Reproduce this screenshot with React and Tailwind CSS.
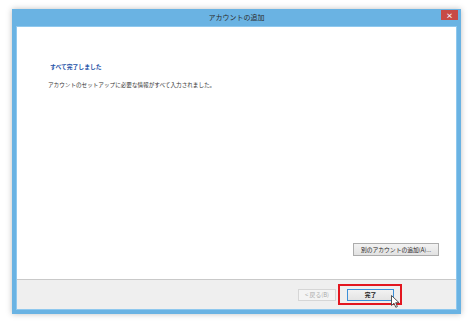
import React from 'react';

// pointer cursor drawn over the finish button
function Cursor() {
  return (
    <svg width="9" height="13" viewBox="0 0 9 13" className="absolute left-[44px] top-[6px]">
      <path d="M0.5 0.5 L0.5 10.5 L3 8.2 L4.8 12.3 L6.4 11.6 L4.7 7.7 L8 7.7 Z" fill="#fff" stroke="#444" strokeWidth="0.9" strokeLinejoin="round" />
    </svg>
  );
}

export default function App() {
  const jp = { fontFamily: '"Noto Sans CJK JP", "Noto Sans", sans-serif' };

  return (
    <div className="w-[471px] h-[326px] bg-white pt-[9px] pl-[12px]" style={jp}>
      <div className="w-[449px] h-[305px] flex flex-col bg-[#6ab3e3] shadow-[0_0_6px_rgba(0,0,0,0.25)]">
        {/* Title bar */}
        <div className="relative h-[17px] flex items-center justify-center">
          <span className="text-[7px] text-[#2b2b2b] leading-none">アカウントの追加</span>
          <div className="absolute right-[3px] top-[1px] w-[17px] h-[10px] bg-[#c74a45] flex items-center justify-center">
            <span className="text-white text-[7px] font-bold leading-none">×</span>
          </div>
        </div>

        {/* Client area */}
        <div className="flex-1 mx-[4px] mb-[4px] flex flex-col bg-white border border-[#8fc8ee]">
          <div className="flex-1 flex flex-col pl-[33px] pr-[17px]">
            <div className="mt-[37px] text-[5.8px] font-semibold text-[#2553a8] leading-none">すべて完了しました</div>
            <div className="mt-[13px] -ml-[2px] text-[5.6px] text-[#333] leading-none">
              アカウントのセットアップに必要な情報がすべて入力されました。
            </div>
            <div className="flex-1" />
            <div className="flex justify-end mb-[23px]">
              <div className="w-[86px] h-[13px] flex items-center justify-center bg-gradient-to-b from-[#f2f2f2] to-[#e2e2e2] border border-[#acacac] text-[5.8px] text-[#222] leading-none">
                別のアカウントの追加(A)...
              </div>
            </div>
          </div>

          {/* Footer */}
          <div className="h-[30px] bg-[#efefef] border-t border-[#c9c9c9] flex justify-end items-start pt-[9px] pr-[62px] gap-[11px]">
            <div className="w-[38px] h-[12px] flex items-center justify-center bg-[#f4f4f4] border border-[#d6d6d6] text-[5.8px] text-[#a8a8a8] leading-none">
              &lt; 戻る(B)
            </div>
            <div className="relative">
              <div className="w-[47px] h-[12px] flex items-center justify-center bg-gradient-to-b from-[#f2f2f2] to-[#e4e4e4] border border-[#3c8fd8] text-[5.8px] text-[#222] font-bold leading-none">
                完了
              </div>
              <div className="absolute -left-[9px] -right-[8px] -top-[5px] -bottom-[4px] border-2 border-[#e3161f]" />
              <Cursor />
            </div>
          </div>
        </div>
      </div>
    </div>
  );
}
